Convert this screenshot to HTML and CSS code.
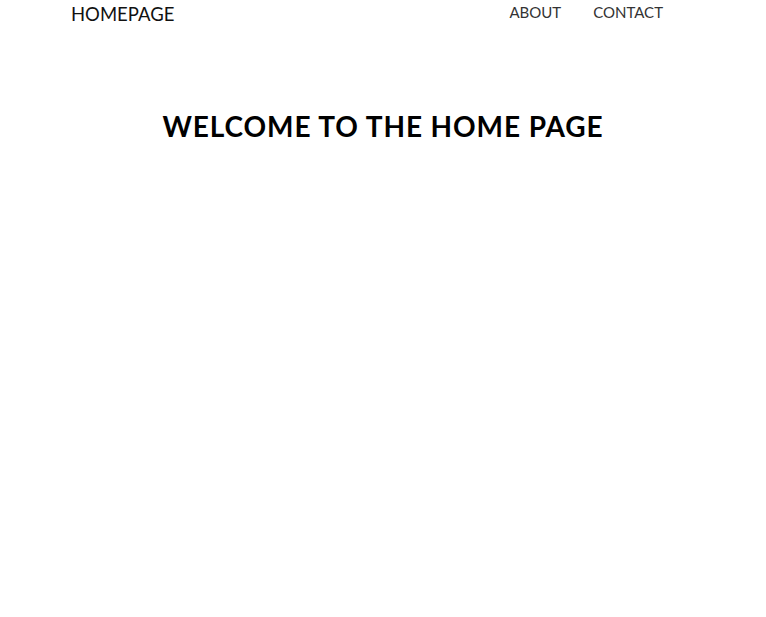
FILE: index.html
```html
<!DOCTYPE html>
<html>
<head>
<meta charset="utf-8">
<link rel="stylesheet" href="styles.css">
</head>
<body>
<header class="nav">
  <a class="brand" href="#">HOMEPAGE</a>
  <nav class="links">
    <a href="#">ABOUT</a>
    <a href="#">CONTACT</a>
  </nav>
</header>
<main class="main">
  <h1 class="title">WELCOME TO THE HOME PAGE</h1>
</main>
</body>
</html>
```
FILE: styles.css
```css
html, body {
  margin: 0;
  padding: 0;
  background: #fff;
}
body {
  font-family: "Lato", "Open Sans", sans-serif;
  color: #111;
}
.nav {
  display: flex;
  justify-content: space-between;
  align-items: flex-start;
  padding: 3px 103px 0 71px;
}
.brand {
  font-size: 18.5px;
  color: #111;
  text-decoration: none;
  line-height: 22px;
}
.links {
  display: flex;
  gap: 32px;
  margin-top: -1px;
}
.links a {
  font-size: 15px;
  color: #333;
  text-decoration: none;
  line-height: 20px;
}
.main {
  text-align: center;
  padding-top: 84px;
}
.title {
  margin: 0;
  font-size: 28px;
  font-weight: 700;
  letter-spacing: 0.9px;
  color: #000;
}
```
